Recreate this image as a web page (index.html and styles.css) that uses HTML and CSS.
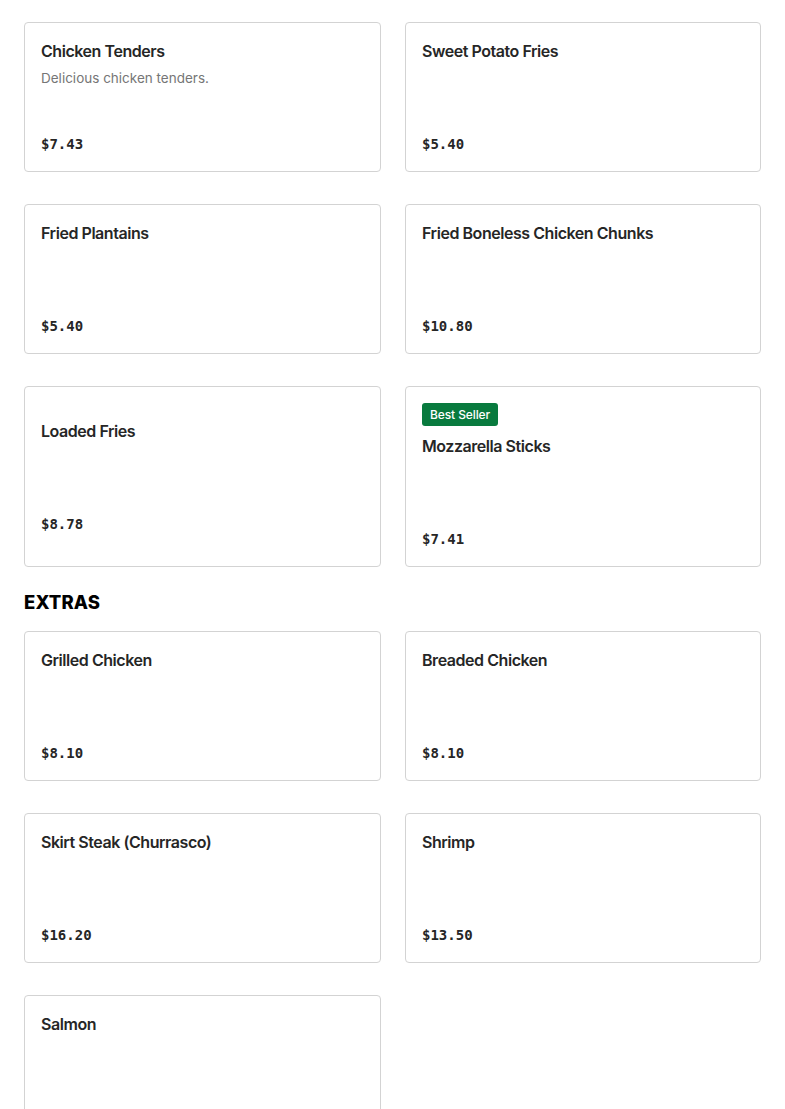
FILE: index.html
```html
<!DOCTYPE html>
<html lang="en">
<head>
<meta charset="utf-8">
<title>Menu</title>
<link rel="stylesheet" href="styles.css">
</head>
<body>
<main class="page">
  <section class="grid">
    <article class="card"><div class="card-body">
      <h3 class="title">Chicken Tenders</h3>
      <p class="desc">Delicious chicken tenders.</p>
      <p class="price">$7.43</p>
    </div></article>
    <article class="card"><div class="card-body">
      <h3 class="title">Sweet Potato Fries</h3>
      <p class="desc"></p>
      <p class="price">$5.40</p>
    </div></article>
    <article class="card"><div class="card-body">
      <h3 class="title">Fried Plantains</h3>
      <p class="desc"></p>
      <p class="price">$5.40</p>
    </div></article>
    <article class="card"><div class="card-body">
      <h3 class="title">Fried Boneless Chicken Chunks</h3>
      <p class="desc"></p>
      <p class="price">$10.80</p>
    </div></article>
    <article class="card"><div class="card-body">
      <h3 class="title">Loaded Fries</h3>
      <p class="desc"></p>
      <p class="price">$8.78</p>
    </div></article>
    <article class="card"><div class="card-body">
      <span class="badge">Best Seller</span>
      <h3 class="title">Mozzarella Sticks</h3>
      <p class="desc"></p>
      <p class="price">$7.41</p>
    </div></article>
  </section>

  <h2 class="section-title">EXTRAS</h2>

  <section class="grid">
    <article class="card"><div class="card-body">
      <h3 class="title">Grilled Chicken</h3>
      <p class="desc"></p>
      <p class="price">$8.10</p>
    </div></article>
    <article class="card"><div class="card-body">
      <h3 class="title">Breaded Chicken</h3>
      <p class="desc"></p>
      <p class="price">$8.10</p>
    </div></article>
    <article class="card"><div class="card-body">
      <h3 class="title">Skirt Steak (Churrasco)</h3>
      <p class="desc"></p>
      <p class="price">$16.20</p>
    </div></article>
    <article class="card"><div class="card-body">
      <h3 class="title">Shrimp</h3>
      <p class="desc"></p>
      <p class="price">$13.50</p>
    </div></article>
    <article class="card"><div class="card-body">
      <h3 class="title">Salmon</h3>
      <p class="desc"></p>
      <p class="price">$16.20</p>
    </div></article>
  </section>
</main>
</body>
</html>
```

FILE: styles.css
```css
* { box-sizing: border-box; }

html, body {
  margin: 0;
  padding: 0;
  background: #ffffff;
}

body {
  font-family: "Inter", "Liberation Sans", sans-serif;
  color: #2b2b2b;
}

.page {
  padding: 22px 24px 40px 24px;
}

.grid {
  display: grid;
  grid-template-columns: 357px 356px;
  column-gap: 24px;
  row-gap: 32px;
}

.card {
  border: 1px solid #d3d3d3;
  border-radius: 4px;
  min-height: 150px;
  padding: 16px;
  display: flex;
  flex-direction: column;
  justify-content: center;
  background: #fff;
}

.card-body {
  display: flex;
  flex-direction: column;
  align-items: flex-start;
}

.badge {
  display: inline-block;
  background: #087a3e;
  color: #ffffff;
  font-size: 12px;
  font-weight: 500;
  line-height: 23px;
  height: 23px;
  padding: 0 8px;
  border-radius: 3px;
  margin-bottom: 8px;
  letter-spacing: -0.1px;
}

.title {
  margin: 0;
  font-size: 16px;
  font-weight: 600;
  line-height: 24px;
  color: #262626;
  letter-spacing: -0.45px;
}

.desc {
  margin: 5px 0 0 0;
  height: 38px;
  font-size: 13.5px;
  line-height: 20px;
  color: #767676;
}

.price {
  margin: 27px 0 0 0;
  font-family: "DejaVu Sans Mono", "Liberation Mono", monospace;
  font-weight: 700;
  font-size: 14px;
  line-height: 22px;
  color: #262626;
}

.section-title {
  margin: 23px 0 17px 0;
  font-size: 18.5px;
  font-weight: 800;
  line-height: 24px;
  color: #000;
  letter-spacing: 0.1px;
}
```
